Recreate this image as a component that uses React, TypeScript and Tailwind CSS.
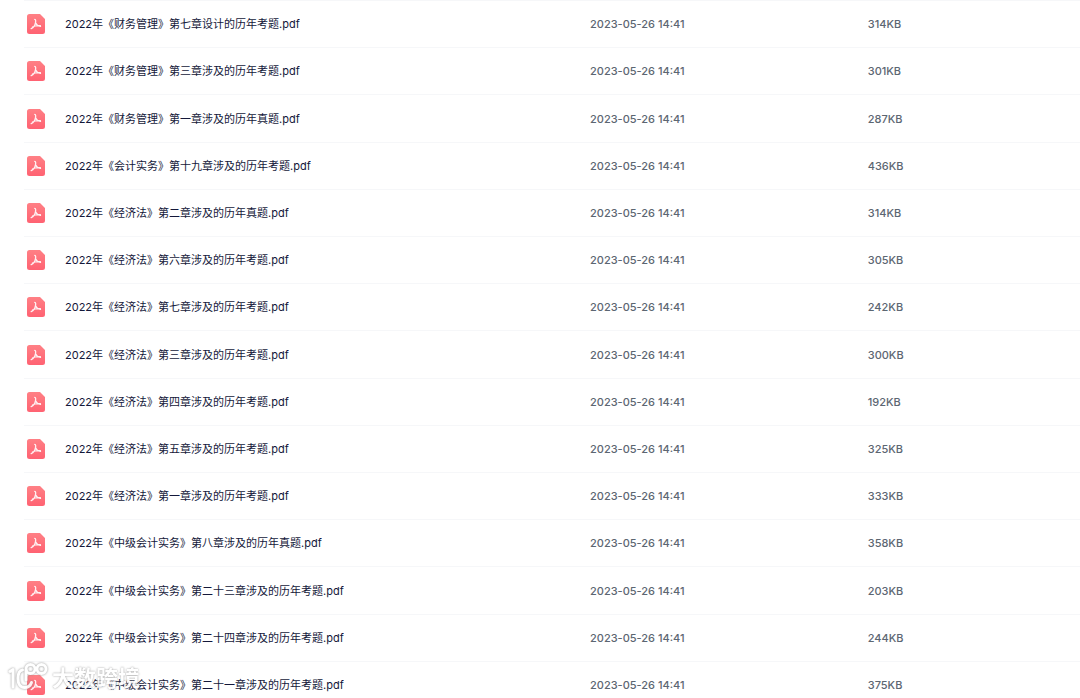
type FileRow = {
  name: string;
  size: string;
};

const modified = "2023-05-26 14:41";

const files: FileRow[] = [
  { name: "2022年《财务管理》第七章设计的历年考题.pdf", size: "314KB" },
  { name: "2022年《财务管理》第三章涉及的历年考题.pdf", size: "301KB" },
  { name: "2022年《财务管理》第一章涉及的历年真题.pdf", size: "287KB" },
  { name: "2022年《会计实务》第十九章涉及的历年考题.pdf", size: "436KB" },
  { name: "2022年《经济法》第二章涉及的历年真题.pdf", size: "314KB" },
  { name: "2022年《经济法》第六章涉及的历年考题.pdf", size: "305KB" },
  { name: "2022年《经济法》第七章涉及的历年考题.pdf", size: "242KB" },
  { name: "2022年《经济法》第三章涉及的历年考题.pdf", size: "300KB" },
  { name: "2022年《经济法》第四章涉及的历年考题.pdf", size: "192KB" },
  { name: "2022年《经济法》第五章涉及的历年考题.pdf", size: "325KB" },
  { name: "2022年《经济法》第一章涉及的历年考题.pdf", size: "333KB" },
  { name: "2022年《中级会计实务》第八章涉及的历年真题.pdf", size: "358KB" },
  { name: "2022年《中级会计实务》第二十三章涉及的历年考题.pdf", size: "203KB" },
  { name: "2022年《中级会计实务》第二十四章涉及的历年考题.pdf", size: "244KB" },
  { name: "2022年《中级会计实务》第二十一章涉及的历年考题.pdf", size: "375KB" },
];

export default function App() {
  return (
    <main className="min-h-screen bg-white pl-6 font-['Inter','Noto_Sans_CJK_SC',sans-serif]">
      <table className="w-full table-fixed border-collapse text-left text-[11px] leading-4">
        <colgroup>
          <col className="w-[53.6%]" />
          <col className="w-[26.3%]" />
          <col />
        </colgroup>
        <tbody>
          {files.map((file) => (
            <tr key={file.name} className="h-[47px] border-t border-[#f6f7f9] nth-[5n+3]:h-12">
              <td className="p-0">
                <div className="flex items-center gap-5 pl-[3px]">
                  <PdfIcon />
                  <span className="truncate text-[#14183a]">{file.name}</span>
                </div>
              </td>
              <td className="p-0 font-medium text-[#5c6672]">{modified}</td>
              <td className="p-0 font-medium text-[#5c6672]">{file.size}</td>
            </tr>
          ))}
        </tbody>
      </table>
      <Watermark />
    </main>
  );
}

function PdfIcon() {
  return (
    <svg className="shrink-0" width="18" height="20" viewBox="0 0 18 20" fill="none" aria-hidden="true">
      <defs>
        <linearGradient id="pdf-red" x1="0" y1="0" x2="0" y2="1">
          <stop offset="0" stopColor="#ff8085" />
          <stop offset="1" stopColor="#ff6272" />
        </linearGradient>
      </defs>
      <path d="M2.500 0h10.500L18 5v12.500a2.500 2.500 0 0 1-2.500 2.500h-13A2.500 2.500 0 0 1 0 17.500v-15A2.500 2.500 0 0 1 2.500 0Z" fill="url(#pdf-red)" />
      <path
        d="M7.800 5.400c1.100 0 .9 2.200.7 3.300-.4 2.200-2 5-4.300 6M8.500 8.700c.6 1.600 2.500 3.200 5 3.600M5.500 13c1.800-1.100 4.500-1.700 7.900-1.300"
        stroke="#fff"
        strokeOpacity="0.9"
        strokeWidth="1.300"
        strokeLinecap="round"
        strokeLinejoin="round"
      />
    </svg>
  );
}

function Watermark() {
  return (
    <div className="pointer-events-none fixed bottom-1 left-2 flex items-center gap-1 opacity-90">
      <svg
        className="drop-shadow-[0_0_1px_#888888]"
        width="40"
        height="32"
        viewBox="0 0 40 32"
        fill="none"
        stroke="#fff"
        strokeWidth="3"
        strokeLinecap="round"
        strokeLinejoin="round"
        aria-hidden="true"
      >
        <path d="M2 9.500 5 7.500V25" />
        <path d="M14.500 8C11 8.500 10 12 10 16.500c0 5.500 2.500 9 6.500 9 3.500 0 6-2 7-5" />
        <path d="M18 18V8" />
        <circle cx="22.500" cy="7" r="4.500" />
        <circle cx="33.500" cy="7" r="4.500" />
      </svg>
      <span className="text-[22px] leading-8 font-bold text-white [text-shadow:0_0_2px_#888888]">大数跨境</span>
    </div>
  );
}
